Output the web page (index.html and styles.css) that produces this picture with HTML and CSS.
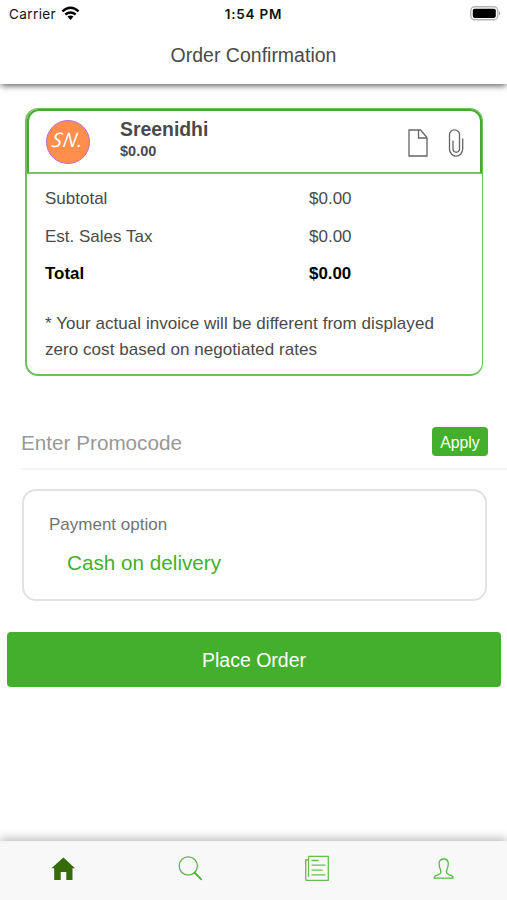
FILE: index.html
```html
<!DOCTYPE html>
<html lang="en">
<head>
<meta charset="utf-8">
<title>Order Confirmation</title>
<link rel="stylesheet" href="styles.css">
</head>
<body>
<div class="screen">
  <header class="header">
    <div class="status">
      <div class="carrier"><span>Carrier</span>
        <svg class="wifi" width="19" height="15" viewBox="0 0 19 15"><path d="M1.4 5.300Q9.500-1.700 17.600 5.300M4.300 8.500Q9.500 4.300 14.700 8.500" fill="none" stroke="#000" stroke-width="2.400"/><path d="M6.500 10.600Q9.500 8.300 12.500 10.600L9.500 13.900Z"/></svg>
      </div>
      <span class="time">1:54 PM</span>
      <svg class="battery" width="31" height="15" viewBox="0 0 31 15"><rect x=".8" y=".8" width="27" height="12.900" rx="3.800" fill="#fff" stroke="#b5b5b5" stroke-width="1.400"/><rect x="2.800" y="2.700" width="23" height="9.200" rx="1.800"/><path d="M29 5Q31.500 7.200 29 9.500Z" fill="#aaa"/></svg>
    </div>
    <h1 class="title">Order Confirmation</h1>
  </header>

  <main class="content">
    <section class="order">
      <div class="vendor">
        <div class="avatar"><span>SN.</span></div>
        <div class="vendor-info">
          <h2>Sreenidhi</h2>
          <p>$0.00</p>
        </div>
        <svg class="doc" width="20" height="28" viewBox="0 0 20 28"><path d="M1 1H12.500L19 8.500V27H1ZM10.500 1V9H19M12.500 1L19 8.500" fill="none" stroke="#666" stroke-width="1.300"/></svg>
        <svg class="clip" width="16" height="28" viewBox="0 0 16 28"><path d="M11.500 8V5.500A5 4.700 0 0 0 1.500 5.500V20A6.500 7 0 0 0 14.700 20V9.500M11.500 7V20.500A3.300 3.300 0 0 1 5 20.500V11.500" fill="none" stroke="#666" stroke-width="1.300"/></svg>
      </div>
      <div class="summary">
        <div class="row"><span>Subtotal</span><span>$0.00</span></div>
        <div class="row"><span>Est. Sales Tax</span><span>$0.00</span></div>
        <div class="row total"><span>Total</span><span>$0.00</span></div>
        <p class="note">* Your actual invoice will be different from displayed<br>zero cost based on negotiated rates</p>
      </div>
    </section>

    <div class="promo">
      <span class="promo-label">Enter Promocode</span>
      <button class="apply">Apply</button>
    </div>

    <section class="payment">
      <h3>Payment option</h3>
      <p>Cash on delivery</p>
    </section>

    <button class="place">Place Order</button>
  </main>

  <nav class="tabs">
    <a><svg width="24" height="26" viewBox="0 0 24 26"><path d="M12.400 2.500L.4 13.300H3.200V25H9.700V17H15.300V25H21.500V13.300H24Z" fill="#366b0a"/></svg></a>
    <a><svg width="24" height="26" viewBox="0 0 24 26"><circle cx="10.300" cy="11" r="9.100" fill="none" stroke="#5cb84a" stroke-width="1.300"/><path d="M16.500 17.500L23 24.200" stroke="#4db337" stroke-width="1.900" stroke-linecap="round"/></svg></a>
    <a><svg width="24" height="26" viewBox="0 0 24 26"><path d="M3.500 1.300H23.300V25.500H2Q.7 25.500.7 23.800V5H3.500M3.500 1.300V22M6.500 5.500H13.500M6.500 10.200H20.500M6.500 15.100H17.700M6.500 19.900H20.500" fill="none" stroke="#69bc55" stroke-width="1.300"/></svg></a>
    <a><svg width="24" height="26" viewBox="0 0 24 26"><path d="M8.800 15.500Q7.100 12 7.100 8.500Q7.300 4 11.700 4T16.300 8.500Q16.300 12 14.600 15.500Q13.900 18.400 16.800 19.600L19.500 20.600Q21.200 21.400 21.200 23.200H2.200Q2.200 21.400 3.900 20.600L6.600 19.600Q9.500 18.400 8.800 15.500Z" fill="none" stroke="#5cb84a" stroke-width="1.300"/></svg></a>
  </nav>
</div>
</body>
</html>
```
FILE: styles.css
```css
* { box-sizing: border-box; }
body, h1, h2, h3, p { margin: 0; }
body { background: #fff; color: #4a4a4a; font-family: "Liberation Sans", Arial, sans-serif; }
button { border: 0; padding: 0; font-family: inherit; color: #fff; background: #44af2c; }
svg { display: block; flex: none; }

.screen { height: 900px; display: flex; flex-direction: column; overflow: hidden; }
.header { height: 84px; box-shadow: 0 3px 6px -1px rgba(0, 0, 0, .6); }
.status { height: 27px; padding: 0 6px 0 9px; display: grid; grid-template-columns: 1fr auto 1fr; align-items: center; color: #111; font-family: Inter, sans-serif; }
.carrier { display: flex; gap: 5px; align-items: center; font-size: 13.5px; letter-spacing: .4px; }
.time { font-size: 13.5px; font-weight: 600; letter-spacing: .75px; margin-right: 3px; }
.battery { justify-self: end; }
.title { font-size: 19.5px; font-weight: 400; line-height: 24px; margin-top: 16px; text-align: center; }

.content { flex: 1; display: flex; flex-direction: column; }
.order { width: 458px; height: 268px; margin: 24px 0 0 25px; border: 1px solid #6dc15b; border-width: 1px 1.5px 2px 2px; border-radius: 13px; }
.vendor { height: 65px; display: flex; align-items: center; padding: 0 16px 0 17px; border: 2px solid #44ab2e; border-left-width: 2px; border-bottom: 2px solid #73c663; border-radius: 12px 12px 0 0; }
.avatar { width: 44px; height: 44px; display: grid; place-items: center; border: 1.5px solid #bb6dce; border-radius: 50%; background: #ff8d4c; color: #fff; }
.avatar span { font: italic 400 20px/22px "Open Sans", sans-serif; letter-spacing: 1px; transform: translateY(-2px) skewX(-9deg); }
.vendor-info { margin: -4px auto 0 30px; }
.vendor-info h2 { font-size: 19.4px; line-height: 23px; }
.vendor-info p { font-size: 14.5px; font-weight: 700; line-height: 21px; }
.doc { margin: 2px 20px 0 0; }
.clip { margin-top: 2px; }
.summary { padding: 6px 18px; font-size: 17px; }
.row { height: 37.7px; display: grid; grid-template-columns: 264px 1fr; align-items: center; }
.total { color: #000; font-weight: 700; font-size: 16.9px; }
.note { margin-top: 18px; line-height: 26px; letter-spacing: .05px; white-space: nowrap; }

.promo { height: 60px; margin: 34px 0 0 21px; padding-right: 19px; display: flex; justify-content: space-between; align-items: center; border-bottom: 2px solid #f5f5f5; }
.promo-label { font-size: 20.7px; color: #999; padding-top: 8px; }
.apply { width: 56px; height: 29px; margin-top: 5px; padding-top: 2px; border-radius: 4px; font-size: 15.8px; }
.payment { width: 465px; height: 112px; margin: 19px 0 0 21.5px; padding: 22px 25.5px; border: 2px solid #e2e2e2; border-radius: 14px; }
.payment h3 { font-size: 17px; font-weight: 400; line-height: 24px; color: #737373; }
.payment p { margin: 13px 0 0 18px; font-size: 20.7px; line-height: 26px; color: #44af2c; }
.place { height: 55px; margin: 31px 6px 0 7px; padding-top: 2px; border-radius: 4px; font-size: 19.5px; }

.tabs { height: 59px; display: grid; grid-template-columns: repeat(4, 1fr); padding-top: 13px; background: #f8f8f8; border-top: 1px solid #f4f4f4; box-shadow: 0 -3px 9px rgba(0, 0, 0, .25); }
.tabs a { display: flex; justify-content: center; }
```
